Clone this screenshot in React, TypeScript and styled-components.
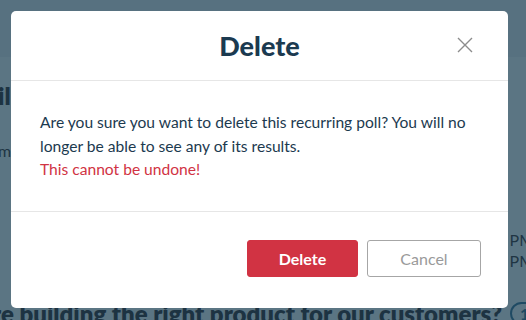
import React from "react";
import styled, { createGlobalStyle } from "styled-components";

const GlobalStyle = createGlobalStyle`
  html, body {
    margin: 0;
    padding: 0;
  }
  body {
    font-family: "Lato", "Liberation Sans", sans-serif;
  }
`;

const App = () => {
  return (
    <PageS>
      <GlobalStyle />
      <Backdrop />
      <DeleteModal />
    </PageS>
  );
};

const Backdrop = () => {
  return (
    <BackdropS>
      <TopBarS />
      <BackdropBodyS>
        <LeftPeekS>
          <PeekTitleS>il</PeekTitleS>
          <PeekTextS>m</PeekTextS>
        </LeftPeekS>
        <RightPeekS>
          <PeekTextS>PM</PeekTextS>
          <PeekTextS>PM</PeekTextS>
        </RightPeekS>
      </BackdropBodyS>
      <DividerS />
      <QuestionRowS>
        <QuestionS>re building the right product for our customers?</QuestionS>
        <CountPillS>1</CountPillS>
      </QuestionRowS>
    </BackdropS>
  );
};

const DeleteModal = () => {
  return (
    <ModalS role="dialog">
      <ModalHeaderS>
        <ModalTitleS>Delete</ModalTitleS>
        <CloseButtonS aria-label="Close">
          <svg width="16" height="16" viewBox="0 0 16 16">
            <path
              d="M1 1 L15 15 M15 1 L1 15"
              stroke="#8c8c8c"
              strokeWidth="1.4"
              fill="none"
            />
          </svg>
        </CloseButtonS>
      </ModalHeaderS>
      <ModalBodyS>
        <p>
          Are you sure you want to delete this recurring poll? You will no
          longer be able to see any of its results.
        </p>
        <WarningS>This cannot be undone!</WarningS>
      </ModalBodyS>
      <ModalFooterS>
        <ButtonS variant="danger">Delete</ButtonS>
        <ButtonS variant="outline">Cancel</ButtonS>
      </ModalFooterS>
    </ModalS>
  );
};

//style-----------------------------------------
const PageS = styled.div`
  position: relative;
  width: 526px;
  height: 320px;
  overflow: hidden;
  background-color: #5b7583;
`;
const BackdropS = styled.div`
  display: flex;
  flex-direction: column;
  height: 100%;
  color: #1d3342;
`;
const TopBarS = styled.div`
  height: 57px;
  background-color: #577180;
  flex-shrink: 0;
`;
const BackdropBodyS = styled.div`
  display: flex;
  justify-content: space-between;
  height: 232px;
  flex-shrink: 0;
`;
const LeftPeekS = styled.div`
  display: flex;
  flex-direction: column;
  padding-top: 24px;
  margin-left: -2px;
  gap: 30px;
`;
const RightPeekS = styled.div`
  display: flex;
  flex-direction: column;
  padding-top: 173px;
  margin-right: -8px;
  gap: 1px;
`;
const PeekTitleS = styled.div`
  font-size: 24px;
  font-weight: 800;
  line-height: 30px;
`;
const PeekTextS = styled.div`
  font-size: 16px;
  line-height: 20px;
  color: #1f3544;
`;
const DividerS = styled.div`
  height: 1px;
  background-color: #52697a;
`;
const QuestionRowS = styled.div`
  display: flex;
  align-items: center;
  gap: 8px;
  margin-left: -8px;
  margin-top: 10px;
`;
const QuestionS = styled.div`
  font-size: 24px;
  font-weight: 800;
  white-space: nowrap;
`;
const CountPillS = styled.div`
  border: 2px solid #1f4a63;
  border-radius: 12px;
  padding: 0 8px;
  font-size: 16px;
  font-weight: 700;
  color: #1f4a63;
`;
const ModalS = styled.div`
  position: absolute;
  left: 11px;
  top: 11px;
  width: 497px;
  display: flex;
  flex-direction: column;
  background-color: #ffffff;
  border-radius: 5px;
  color: #1c3a4f;
`;
const ModalHeaderS = styled.div`
  position: relative;
  display: flex;
  align-items: center;
  justify-content: center;
  height: 69px;
  border-bottom: 1px solid #e6e6e6;
`;
const ModalTitleS = styled.h2`
  margin: 0;
  font-size: 27px;
  font-weight: 900;
  color: #1b3a50;
`;
const CloseButtonS = styled.button`
  position: absolute;
  right: 35px;
  top: 26px;
  width: 16px;
  height: 16px;
  padding: 0;
  border: none;
  background: none;
  cursor: pointer;
  display: flex;
`;
const ModalBodyS = styled.div`
  padding: 30px 29px 29px;
  font-size: 15.6px;
  line-height: 23.5px;
  border-bottom: 1px solid #e6e6e6;
  p {
    margin: 0;
  }
`;
const WarningS = styled.p`
  color: #d13343;
`;
const ModalFooterS = styled.div`
  display: flex;
  justify-content: flex-end;
  gap: 9px;
  padding: 28px 27px 31px;
`;
const ButtonS = styled.button<{ variant: "danger" | "outline" }>`
  height: 37px;
  width: ${(p) => (p.variant === "danger" ? "111px" : "114px")};
  border-radius: 3px;
  font-family: inherit;
  font-size: 16px;
  font-weight: ${(p) => (p.variant === "danger" ? 700 : 400)};
  cursor: pointer;
  border: 1px solid
    ${(p) => (p.variant === "danger" ? "#d13343" : "#a6a6a6")};
  background-color: ${(p) => (p.variant === "danger" ? "#d13343" : "#ffffff")};
  color: ${(p) => (p.variant === "danger" ? "#ffffff" : "#9a9a9a")};
`;

export default App;
